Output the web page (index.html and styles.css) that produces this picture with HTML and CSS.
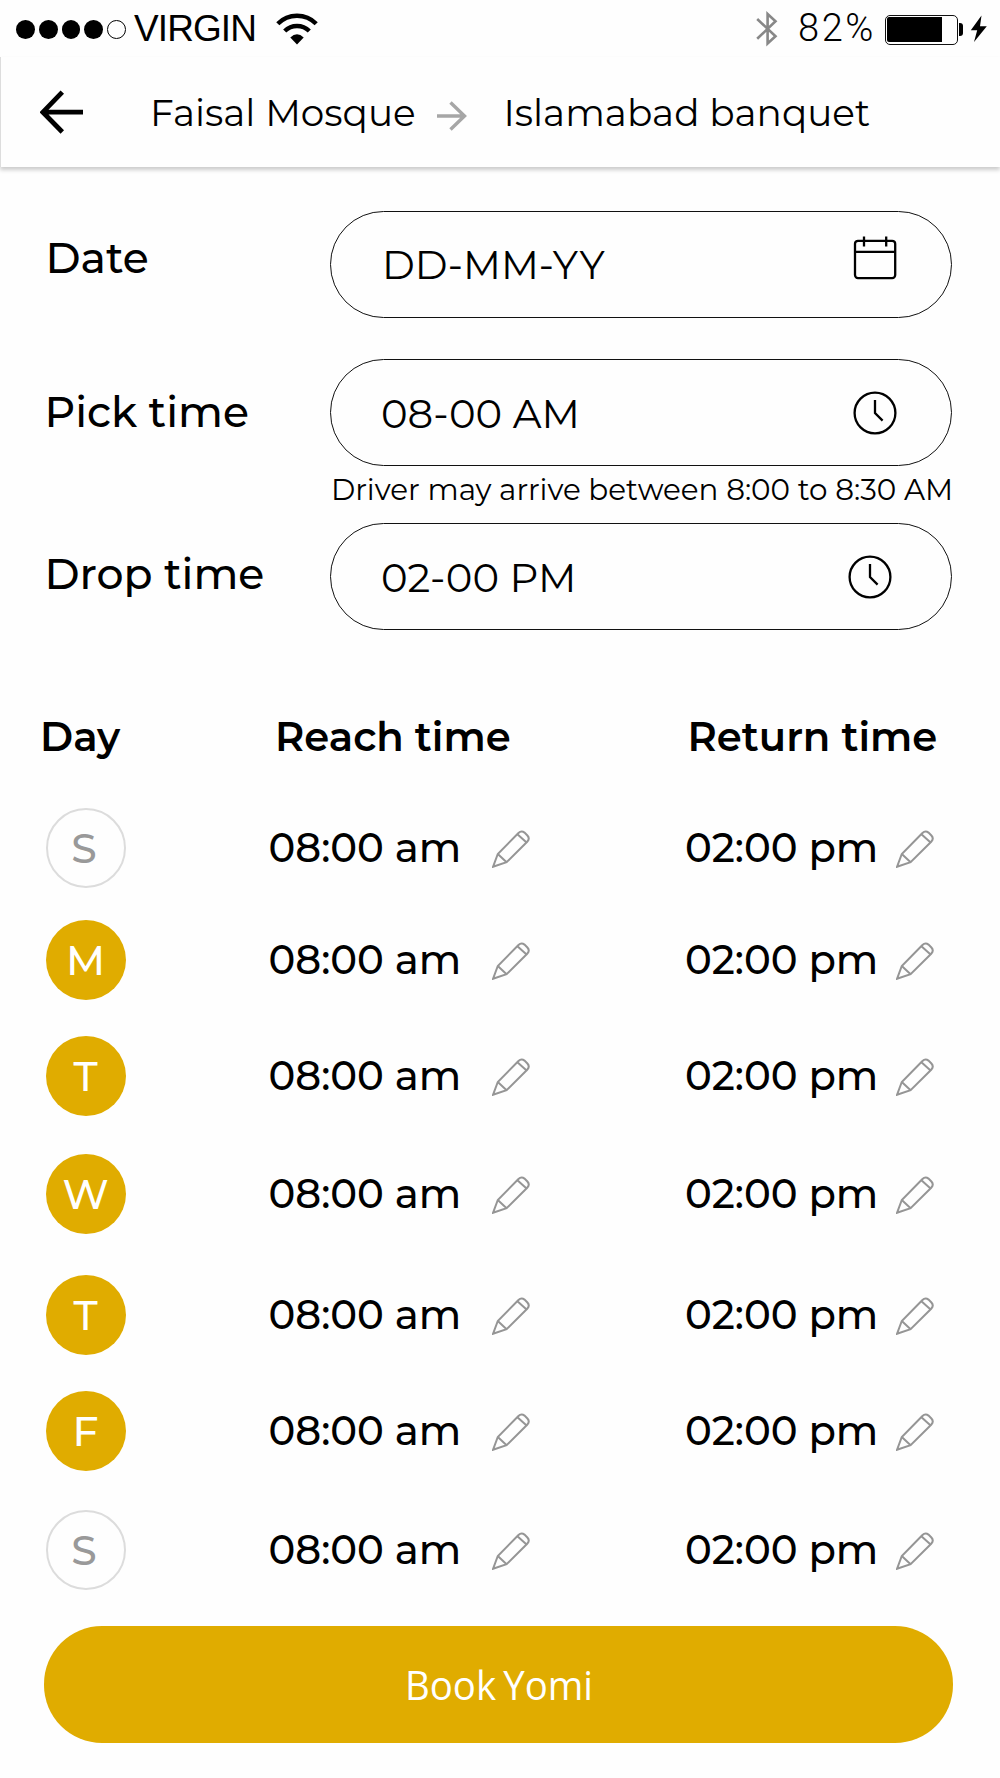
FILE: index.html
```html
<!DOCTYPE html>
<html lang="en">
<head>
<meta charset="utf-8">
<title>Book Yomi</title>
<link rel="stylesheet" href="styles.css">
</head>
<body>
<svg class="defs" aria-hidden="true">
  <symbol id="pencil" viewBox="0 0 38 38"><path d="M1 36.8 5.8 24 26.2 3.3Q29.3 .2 32.5 2.6L35.4 5.5Q38.2 8.6 35.2 11.8L14.6 32.2ZM5.8 24 14.6 32.2M25.4 4.3 34.6 12.6"/></symbol>
  <symbol id="clock" viewBox="0 0 44 44"><circle cx="22" cy="22" r="20.4"/><path d="M22 9V22L29.6 29.6"/></symbol>
</svg>

<div class="status">
  <div class="dots"><i></i><i></i><i></i><i></i><i class="empty"></i></div>
  <span class="carrier">VIRGIN</span>
  <svg class="wifi" width="42" height="34" viewBox="0 0 42 34"><path d="M1.8 11.8A27 27 0 0 1 40.2 11.8M8.7 19A17.5 17.5 0 0 1 33.3 19" fill="none" stroke="#000" stroke-width="4.4"/><path d="M21 32.5 14.3 25.4Q21 19.3 27.7 25.4Z"/></svg>
  <svg class="bluetooth" width="22" height="36" viewBox="0 0 22 36"><path d="M1.2 8 19.5 25.3 11.6 32.5V3L19.5 10.2 1.2 27.8" fill="none" stroke="#888" stroke-width="2.6"/></svg>
  <span class="percent">82%</span>
  <div class="battery"><div class="level"></div></div>
  <div class="nub"></div>
  <svg class="bolt" width="18" height="28" viewBox="0 0 18 28"><path d="M11.5 .5 .8 15.2H7.2L4 27 16.8 11.2H10Z"/></svg>
</div>

<header class="route">
  <svg class="back" width="44" height="44" viewBox="0 0 44 44"><path d="M43 22.2H3.5M22.3 2.2 2.9 22.2 22.3 42" fill="none" stroke="#000" stroke-width="4.8"/></svg>
  <span class="from">Faisal Mosque</span>
  <svg class="to-arrow" width="30" height="30" viewBox="0 0 30 30"><path d="M0 15H28M13.5 1.5 27.5 15 13.5 28.5" fill="none" stroke="#a6a6a6" stroke-width="3.4"/></svg>
  <span class="to">Islamabad banquet</span>
</header>

<main>
  <section class="form">
    <div class="row">
      <span class="label date">Date</span>
      <div class="field"><span class="value v-date">DD-MM-YY</span>
        <svg class="ico calendar" width="44" height="44" viewBox="0 0 44 44"><rect x="2" y="4.8" width="40.2" height="37.3" rx="3"/><path d="M2 15.8H42.2M11 .5V10.5M33.2 .5V10.5"/></svg></div>
    </div>
    <div class="row">
      <span class="label pick">Pick time</span>
      <div class="field"><span class="value">08-00 AM</span><svg class="ico" width="44" height="44"><use href="#clock"/></svg></div>
    </div>
    <p class="hint">Driver may arrive between 8:00 to 8:30 AM</p>
    <div class="row">
      <span class="label drop">Drop time</span>
      <div class="field field-drop"><span class="value">02-00 PM</span><svg class="ico" width="44" height="44"><use href="#clock"/></svg></div>
    </div>
  </section>

  <section class="schedule">
    <div class="line head"><span class="h-day">Day</span><span class="h-reach">Reach time</span><span class="h-return">Return time</span></div>
    <div class="line sun"><span class="day off">S</span><span class="time am">08:00 am</span><svg class="edit"><use href="#pencil"/></svg><span class="time pm">02:00 pm</span><svg class="edit"><use href="#pencil"/></svg></div>
    <div class="line mon"><span class="day">M</span><span class="time am">08:00 am</span><svg class="edit"><use href="#pencil"/></svg><span class="time pm">02:00 pm</span><svg class="edit"><use href="#pencil"/></svg></div>
    <div class="line tue"><span class="day">T</span><span class="time am">08:00 am</span><svg class="edit"><use href="#pencil"/></svg><span class="time pm">02:00 pm</span><svg class="edit"><use href="#pencil"/></svg></div>
    <div class="line wed"><span class="day">W</span><span class="time am">08:00 am</span><svg class="edit"><use href="#pencil"/></svg><span class="time pm">02:00 pm</span><svg class="edit"><use href="#pencil"/></svg></div>
    <div class="line thu"><span class="day">T</span><span class="time am">08:00 am</span><svg class="edit"><use href="#pencil"/></svg><span class="time pm">02:00 pm</span><svg class="edit"><use href="#pencil"/></svg></div>
    <div class="line fri"><span class="day">F</span><span class="time am">08:00 am</span><svg class="edit"><use href="#pencil"/></svg><span class="time pm">02:00 pm</span><svg class="edit"><use href="#pencil"/></svg></div>
    <div class="line sat"><span class="day off">S</span><span class="time am">08:00 am</span><svg class="edit"><use href="#pencil"/></svg><span class="time pm">02:00 pm</span><svg class="edit"><use href="#pencil"/></svg></div>
  </section>

  <div class="book" role="button"><span>Book Yomi</span></div>
</main>
</body>
</html>
```
FILE: styles.css
```css
* { box-sizing: border-box; }

body {
  margin: 0;
  width: 1000px;
  height: 1778px;
  overflow: hidden;
  background: #fefefe;
  color: #000;
  font-family: Montserrat, Inter, sans-serif;
  white-space: nowrap;
}

.defs { display: none; }
svg { display: block; flex: none; }

/* Status bar */
.status {
  display: flex;
  align-items: center;
  height: 57px;
  padding-left: 16px;
}
.dots { display: flex; gap: 4px; width: 118px; margin-top: 2px; }
.dots i { width: 18.8px; height: 18.8px; border-radius: 50%; background: #000; }
.dots .empty { background: none; border: 1.4px solid #000; }
.carrier {
  width: 142px;
  font: 37px/57px "Liberation Sans", Arial, sans-serif;
  letter-spacing: -0.9px;
}
.wifi { margin-top: 0; }
.bluetooth { margin-left: 438px; }
.percent {
  width: 86.5px;
  margin-left: 20px;
  font: 300 38px/57px Roboto, sans-serif;
  letter-spacing: 2.6px;
}
.battery {
  width: 73px;
  height: 30px;
  margin-top: 2px;
  padding: 1.8px;
  border: 1.6px solid #111;
  border-radius: 5px;
}
.level { width: 55px; height: 100%; background: #000; border-radius: 2px 0 0 2px; }
.nub { width: 4px; height: 13px; margin: 2px 7px 0 1px; background: #000; border-radius: 0 3px 3px 0; }

/* Route header */
.route {
  display: flex;
  align-items: center;
  height: 110px;
  padding-left: 39px;
  border-left: 1px solid #ddd;
  box-shadow: 0 3px 4px rgba(0, 0, 0, .2);
  font-size: 37.4px;
  line-height: 44px;
}
.from { width: 286.5px; margin-left: 66px; padding-top: 1px; }
.to-arrow { margin: 7px 0 0; }
.to { margin-left: 37px; padding-top: 1px; }

/* Form */
.form { padding-top: 44px; }
.row { display: flex; height: 107px; }
.row + .row { margin-top: 41px; }
.label {
  flex: none;
  width: 285px;
  margin-left: 44.5px;
  font-size: 42.5px;
  font-weight: 500;
  line-height: 106px;
}
.date { line-height: 94px; padding-left: 1px; }
.drop { line-height: 103px; }
.field {
  display: flex;
  justify-content: space-between;
  align-items: center;
  width: 622.5px;
  height: 107px;
  padding: 0 54px 0 50.5px;
  border: 1.4px solid #111;
  border-radius: 54px;
  font-size: 40.2px;
}
.value { padding-top: 1px; }
.v-date { padding-left: 1px; font-size: 39.7px; }
.field-drop { padding-right: 59px; }
.ico { fill: none; stroke: #000; stroke-width: 2.3; }
.calendar { margin-bottom: 13px; }
.hint {
  height: 57px;
  margin: 0;
  padding-left: 331px;
  font-size: 29.4px;
  line-height: 48px;
}

/* Weekly schedule */
.line { display: flex; align-items: center; height: 80px; padding-left: 45.5px; }
.head {
  height: 54px;
  margin-top: 79px;
  padding-left: 40px;
  font-size: 40.15px;
  font-weight: 600;
}
.h-day { width: 235px; }
.h-reach { width: 412.5px; }
.sun { margin-top: 45px; }
.mon { margin-top: 32px; }
.tue { margin-top: 36px; }
.wed { margin-top: 37.5px; }
.thu { margin-top: 41.5px; }
.fri { margin-top: 36px; }
.sat { margin-top: 39px; }
.day {
  width: 80px;
  height: 80px;
  border-radius: 50%;
  background: #e0ac00;
  color: #fff;
  font-size: 41px;
  font-weight: 500;
  line-height: 80px;
  text-align: center;
}
.off { padding-right: 3px; background: none; border: 2px solid #dcdcdc; color: #999; line-height: 76px; }
.time { height: 80px; font-size: 40.2px; font-weight: 500; line-height: 79.5px; }
.am { width: 223px; margin-left: 143px; }
.pm { width: 211px; margin-left: 155.5px; }
.edit { width: 38px; height: 38px; margin-top: 2px; fill: none; stroke: #959595; stroke-width: 2; }

/* Booking button */
.book {
  width: 909px;
  height: 117px;
  margin: 36px 0 0 44px;
  border-radius: 58px;
  background: #e0ac00;
  color: #fff;
  font: 40px/117px "Open Sans", sans-serif;
  text-align: center;
}
.book span { display: inline-block; transform: scaleX(.96); word-spacing: -3px; }
```
